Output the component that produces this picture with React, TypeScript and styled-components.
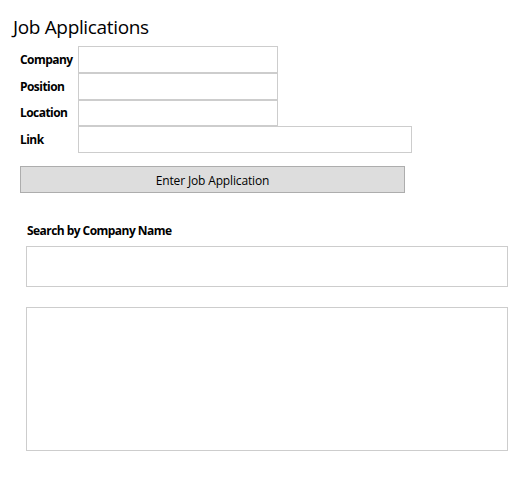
import React from "react";
import styled, { createGlobalStyle } from "styled-components";

const Global = createGlobalStyle`
  html, body {
    margin: 0;
    padding: 0;
    background: #ffffff;
  }
  body {
    font-family: "Open Sans", "Noto Sans", sans-serif;
    color: #000000;
  }
  * { box-sizing: border-box; }
`;

const Page = styled.div`
  display: flex;
  flex-direction: column;
  align-items: flex-start;
  padding-top: 15px;
  width: 525px;
  height: 489px;
`;

const Title = styled.h1`
  margin: 0 0 7px 13px;
  font-size: 19px;
  line-height: 24px;
  font-weight: 400;
  letter-spacing: -0.35px;
`;

const Form = styled.div`
  margin-left: 20px;
  display: grid;
  grid-template-columns: 58px auto;
  align-items: center;
`;

const Label = styled.label`
  font-size: 12px;
  font-weight: 700;
  letter-spacing: -0.55px;
  line-height: 16px;
`;

const TextBox = styled.input<{ $w: number; $h: number }>`
  width: ${(p) => p.$w}px;
  height: ${(p) => p.$h}px;
  border: 1px solid #cdcdcd;
  background: #ffffff;
  margin: 0;
  padding: 0 4px;
  outline: none;
  font-family: inherit;
  font-size: 12px;
`;

const Button = styled.button`
  margin: 13px 0 0 20px;
  width: 385px;
  height: 27px;
  background: #dddddd;
  border: 1px solid #adadad;
  font-family: inherit;
  font-size: 12px;
  letter-spacing: -0.15px;
  color: #000000;
  padding: 1px 0 0;
`;

const SearchSection = styled.div`
  margin: 30px 0 0 26px;
  display: flex;
  flex-direction: column;
`;

const SearchLabel = styled.div`
  margin-left: 1px;
  font-size: 12px;
  font-weight: 700;
  line-height: 16px;
  letter-spacing: -0.55px;
  margin-bottom: 7px;
`;

const SearchBox = styled.input`
  width: 482px;
  height: 41px;
  border: 1px solid #cdcdcd;
  margin: 0;
  padding: 0 4px;
  outline: none;
  font-family: inherit;
`;

const ListBox = styled.div`
  margin-top: 20px;
  width: 482px;
  height: 144px;
  border: 1px solid #cdcdcd;
  background: #ffffff;
`;

const fields: { label: string; w: number; h: number }[] = [
  { label: "Company", w: 200, h: 27 },
  { label: "Position", w: 200, h: 27 },
  { label: "Location", w: 200, h: 26 },
  { label: "Link", w: 334, h: 27 },
];

export default function App() {
  return (
    <>
      <Global />
      <Page>
        <Title>Job Applications</Title>
        <Form>
          {fields.map((f) => (
            <React.Fragment key={f.label}>
              <Label>{f.label}</Label>
              <TextBox $w={f.w} $h={f.h} />
            </React.Fragment>
          ))}
        </Form>
        <Button>Enter Job Application</Button>
        <SearchSection>
          <SearchLabel>Search by Company Name</SearchLabel>
          <SearchBox />
          <ListBox />
        </SearchSection>
      </Page>
    </>
  );
}
